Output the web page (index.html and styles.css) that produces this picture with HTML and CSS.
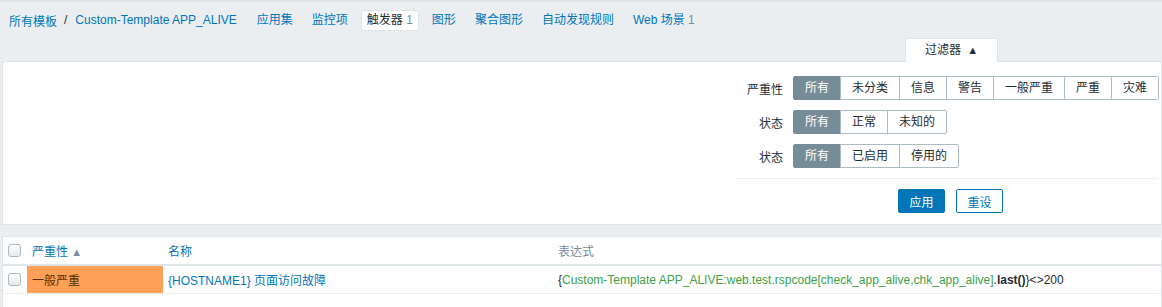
FILE: index.html
```html
<!DOCTYPE html>
<html lang="zh">
<head>
    <meta charset="UTF-8">
    <title>触发器</title>
    <link rel="stylesheet" href="styles.css">
</head>
<body>
    <div class="nav">
        <a class="crumb" href="#">所有模板</a>
        <span class="sep">/</span>
        <a class="crumb" href="#">Custom-Template APP_ALIVE</a>
        <ul class="tabs">
            <li><a href="#">应用集</a></li>
            <li><a href="#">监控项</a></li>
            <li class="selected"><span>触发器</span> <sup>1</sup></li>
            <li><a href="#">图形</a></li>
            <li><a href="#">聚合图形</a></li>
            <li><a href="#">自动发现规则</a></li>
            <li><a href="#">Web 场景</a> <sup>1</sup></li>
        </ul>
    </div>

    <div class="filter-head">
        <div class="filter-tab">过滤器 <span class="arrow">&#9650;</span></div>
    </div>
    <div class="filter-panel">
        <div class="filter-form">
            <div class="filter-row">
                <label>严重性</label>
                <div class="seg">
                    <span class="on">所有</span><span>未分类</span><span>信息</span><span>警告</span><span>一般严重</span><span>严重</span><span>灾难</span>
                </div>
            </div>
            <div class="filter-row">
                <label>状态</label>
                <div class="seg">
                    <span class="on">所有</span><span>正常</span><span>未知的</span>
                </div>
            </div>
            <div class="filter-row">
                <label>状态</label>
                <div class="seg">
                    <span class="on">所有</span><span>已启用</span><span>停用的</span>
                </div>
            </div>
            <div class="filter-buttons">
                <button class="btn-apply">应用</button>
                <button class="btn-reset">重设</button>
            </div>
        </div>
    </div>

    <div class="list-wrap">
        <table class="list">
            <thead>
                <tr>
                    <th class="col-check"><span class="checkbox"></span></th>
                    <th class="col-sev"><a href="#">严重性</a> <span class="sort">&#9650;</span></th>
                    <th class="col-name"><a href="#">名称</a></th>
                    <th>表达式</th>
                </tr>
            </thead>
            <tbody>
                <tr>
                    <td class="col-check"><span class="checkbox"></span></td>
                    <td class="sev-average">一般严重</td>
                    <td class="col-name"><a href="#">{HOSTNAME1} 页面访问故障</a></td>
                    <td class="expr">{<span class="green">Custom-Template APP_ALIVE:web.test.rspcode[check_app_alive,chk_app_alive]</span>.<b>last()</b>}&lt;&gt;200</td>
                </tr>
            </tbody>
        </table>
    </div>
</body>
</html>
```

FILE: styles.css
```css
body {
    margin: 0;
    background-color: #ebeef0;
    border-top: 2px solid #dfe4e7;
    font-family: "Liberation Sans", Arial, "Noto Sans CJK SC", sans-serif;
    font-size: 12px;
    color: #1f2c33;
}
a {
    color: #0275b8;
    text-decoration: none;
}
.nav {
    display: flex;
    align-items: center;
    height: 36px;
    padding-left: 9px;
}
.sep {
    margin: 0 8px 0 7px;
    color: #1f2c33;
}
.tabs {
    display: flex;
    align-items: center;
    list-style: none;
    margin: 0 0 0 14px;
    padding: 0;
}
.tabs li {
    padding: 3px 5px;
    line-height: 13px;
    margin-right: 7px;
    border: 1px solid transparent;
    border-radius: 2px;
}
.tabs li.selected {
    background-color: #fff;
    border-color: #dfe4e7;
}
.tabs sup {
    vertical-align: baseline;
    font-size: 12px;
    color: #768d99;
}
.filter-head {
    display: flex;
    justify-content: flex-end;
    padding-right: 164px;
}
.filter-tab {
    width: 91px;
    height: 23px;
    line-height: 23px;
    text-align: center;
    background-color: #fff;
    border: 1px solid #dfe4e7;
    border-bottom: none;
    margin-bottom: -1px;
    position: relative;
}
.arrow {
    font-size: 11px;
    margin-left: 3px;
}
.filter-panel {
    margin-left: 2px;
    height: 162px;
    background-color: #fff;
    border: 1px solid #dfe4e7;
    display: flex;
    justify-content: flex-end;
}
.filter-form {
    flex-shrink: 0;
    width: 421px;
    padding-top: 14px;
    padding-right: 3px;
}
.filter-row {
    display: flex;
    align-items: center;
    margin-bottom: 10px;
}
.filter-row label {
    flex-shrink: 0;
    width: 46px;
    text-align: right;
    margin-right: 10px;
}
.seg {
    display: flex;
    flex-shrink: 0;
}
.seg span {
    flex-shrink: 0;
    white-space: nowrap;
    height: 22px;
    line-height: 22px;
    padding: 0 11px;
    border: 1px solid #acbbc2;
    margin-left: -1px;
    background-color: #fff;
}
.seg span:first-child {
    margin-left: 0;
    border-radius: 2px 0 0 2px;
}
.seg span:last-child {
    border-radius: 0 2px 2px 0;
}
.seg span.on {
    background-color: #768d99;
    border-color: #768d99;
    color: #fff;
}
.filter-buttons {
    border-top: 1px solid #ebeef0;
    margin-top: 1px;
    padding: 10px 0 0 6px;
    display: flex;
    justify-content: center;
    gap: 11px;
}
.filter-buttons button {
    width: 47px;
    height: 24px;
    font-family: inherit;
    font-size: 12px;
    border-radius: 2px;
    border: 1px solid #0275b8;
}
.btn-apply {
    background-color: #0275b8;
    color: #fff;
}
.btn-reset {
    background-color: #fff;
    color: #0275b8;
}
.list-wrap {
    margin: 11px 0 0 2px;
    padding-bottom: 20px;
    background-color: #fff;
    border: 1px solid #dfe4e7;
    border-bottom: none;
}
.list {
    width: 100%;
    border-collapse: collapse;
}
.list th {
    text-align: left;
    font-weight: normal;
    color: #768d99;
    height: 27px;
    padding: 0 5px;
    border-bottom: 2px solid #dfe4e7;
}
.list td {
    height: 27px;
    padding: 0 5px;
    border-bottom: 1px solid #ebeef0;
}
.col-check {
    width: 14px;
}
.list th.col-sev {
    width: 126px;
}
.col-name {
    width: 380px;
}
.sort {
    font-size: 11px;
    color: #768d99;
}
.checkbox {
    display: block;
    width: 11px;
    height: 11px;
    border: 1px solid #acbbc2;
    border-radius: 3px;
    background: linear-gradient(#fff, #e6e9eb);
}
.sev-average {
    background-color: #ffa059;
    color: #4f2f00;
}
.green {
    color: #429e47;
}
```
